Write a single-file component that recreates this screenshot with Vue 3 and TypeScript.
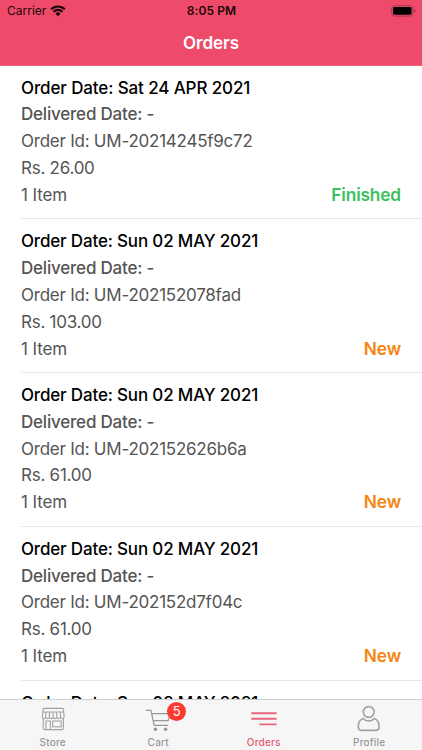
<script setup lang="ts">
interface Order {
  date: string
  delivered: string
  id: string
  price: string
  items: string
  status: 'Finished' | 'New'
}

const orders: Order[] = [
  { date: 'Sat 24 APR 2021', delivered: '-', id: 'UM-20214245f9c72', price: '26.00', items: '1 Item', status: 'Finished' },
  { date: 'Sun 02 MAY 2021', delivered: '-', id: 'UM-202152078fad', price: '103.00', items: '1 Item', status: 'New' },
  { date: 'Sun 02 MAY 2021', delivered: '-', id: 'UM-202152626b6a', price: '61.00', items: '1 Item', status: 'New' },
  { date: 'Sun 02 MAY 2021', delivered: '-', id: 'UM-202152d7f04c', price: '61.00', items: '1 Item', status: 'New' },
]
const nextDate = 'Sun 02 MAY 2021'
</script>

<template>
  <div class="screen">
    <header class="header">
      <div class="status-bar">
        <div class="carrier">
          <span>Carrier</span>
          <svg class="wifi" viewBox="0 0 16 12" width="16" height="12">
            <path d="M1.1 4.3A9.8 9.8 0 0 1 14.9 4.3M3.5 6.8A6.3 6.3 0 0 1 12.5 6.8" fill="none" stroke="#1c060b" stroke-width="2.1" />
            <path d="M5.4 8.6A3.7 3.7 0 0 1 10.6 8.6L8 11.2Z" fill="#1c060b" />
          </svg>
        </div>
        <span class="clock">8:05 PM</span>
        <svg class="battery" viewBox="0 0 25 12" width="25" height="12">
          <rect x="0.7" y="0.7" width="21.2" height="10.4" rx="2.8" fill="none" stroke="#a03850" />
          <rect x="2.1" y="2.1" width="18.4" height="7.6" rx="1.4" fill="#000" />
          <path d="M23.2 4.2Q24.5 4.6 24.5 5.9T23.2 7.6Z" fill="#8b2e41" />
        </svg>
      </div>
      <h1 class="title">Orders</h1>
    </header>

    <main class="orders">
      <article v-for="order in orders" :key="order.id" class="order">
        <p class="date">Order Date: {{ order.date }}</p>
        <p class="delivered">Delivered Date: {{ order.delivered }}</p>
        <p class="order-id">Order Id: {{ order.id }}</p>
        <p class="price">Rs. {{ order.price }}</p>
        <div class="summary">
          <p class="items">{{ order.items }}</p>
          <strong :class="['state', order.status.toLowerCase()]">{{ order.status }}</strong>
        </div>
      </article>
      <article class="order">
        <p class="date">Order Date: {{ nextDate }}</p>
      </article>
    </main>

    <nav class="tabs">
      <div class="tab">
        <svg viewBox="0 0 32 28" width="32" height="28" fill="none" stroke="#a1a1a1" stroke-width="1.1">
          <path d="M6 7V4.8Q6 3.4 7.4 3.4H25.2Q26.6 3.4 26.6 4.8V7Z" />
          <path d="M6 7L5.3 12Q5.5 13.6 6.9 13.6Q8.4 13.6 8.6 12.2Q9 13.6 10.4 13.6Q11.9 13.6 12.3 12.2Q12.8 13.6 14.2 13.6Q15.6 13.6 16.1 12.2Q16.6 13.6 18 13.6Q19.4 13.6 19.9 12.2Q20.4 13.6 21.8 13.6Q23.3 13.6 23.7 12.2Q24.1 13.6 25.5 13.6Q27 13.6 27.2 12L26.6 7M9.1 7L8.6 12.2M12.6 7L12.3 12.2M16.1 7V12.2M19.6 7L19.9 12.2M23.2 7L23.7 12.2" />
          <path d="M6.2 13.6V23.2Q6.2 24.6 7.6 24.6H25Q26.4 24.6 26.4 23.2V13.6M8.9 24.6V16H13.4V24.6" />
          <rect x="15.6" y="16" width="8.6" height="5.8" />
        </svg>
        <span>Store</span>
      </div>
      <div class="tab">
        <div class="cart-icon">
          <svg viewBox="0 0 32 28" width="32" height="28" fill="none" stroke="#979797" stroke-width="1.2">
            <path d="M4 5.3H8.9L12.2 20.3H26M9.7 8.6H28L26.2 15.7H11.2" />
            <circle cx="13.4" cy="24.2" r="1.7" fill="#929292" stroke="none" />
            <circle cx="23.6" cy="24.2" r="1.7" fill="#929292" stroke="none" />
          </svg>
          <span class="badge">5</span>
        </div>
        <span>Cart</span>
      </div>
      <div class="tab active">
        <svg viewBox="0 0 32 28" width="32" height="28" fill="none" stroke="#e6677f" stroke-width="1.9">
          <path d="M3.3 8.2H28.6M3.3 13.8H28.6M11.4 19.4H28.6" />
        </svg>
        <span>Orders</span>
      </div>
      <div class="tab">
        <svg viewBox="0 0 32 28" width="32" height="28" fill="none" stroke="#a1a1a1" stroke-width="1.6">
          <circle cx="15.7" cy="7" r="5.4" />
          <path d="M10.2 13.4C7 14.4 5.3 17.8 5.3 21.8C5.3 24.4 6.6 25.4 8.8 25.4H22.6C24.8 25.4 26.1 24.4 26.1 21.8C26.1 17.8 24.4 14.4 21.2 13.4C19.6 15.4 17.8 16 15.7 16C13.6 16 11.8 15.4 10.2 13.4Z" stroke-linejoin="round" />
        </svg>
        <span>Profile</span>
      </div>
    </nav>
  </div>
</template>

<style>
body {
  background: #fff;
}
</style>

<style scoped>
.screen {
  display: flex;
  flex-direction: column;
  box-sizing: border-box;
  height: 750px;
  overflow: hidden;
  font-family: Inter, "Liberation Sans", sans-serif;
  color: #555;
  background: #fff;
}

.header {
  flex: none;
  box-sizing: border-box;
  height: 65.6px;
  background: #ed4b69;
  border-bottom: 1px solid #e9657f;
}

.status-bar {
  display: grid;
  grid-template-columns: 1fr auto 1fr;
  align-items: center;
  height: 21px;
  padding: 0 6px 0 7px;
  font-size: 12px;
  color: #1c060b;
}

.carrier {
  display: flex;
  align-items: center;
  gap: 4px;
}

.clock {
  font-weight: 600;
  letter-spacing: 0.1px;
}

.battery {
  justify-self: end;
}

.title {
  margin: 0;
  font-size: 17px;
  line-height: 44px;
  font-weight: 600;
  letter-spacing: -0.05px;
  text-align: center;
  color: #fff;
}

.orders {
  flex: 1;
  min-height: 0;
  overflow: hidden;
}

.order {
  box-sizing: border-box;
  height: 153.75px;
  margin-left: 21px;
  padding: 9px 21px 0 0;
  border-bottom: 1px solid #e6e6e6;
}

.order p {
  margin: 0;
  font-size: 17px;
  line-height: 26.8px;
  letter-spacing: -0.1px;
}

.order .date {
  font-weight: 500;
  letter-spacing: -0.17px;
  color: #000;
}

.order:first-child .date {
  letter-spacing: -0.12px;
}

.order .delivered {
  font-weight: 500;
  letter-spacing: -0.2px;
}

.order .order-id {
  letter-spacing: -0.24px;
}

.order .price {
  letter-spacing: -0.25px;
}

.summary {
  display: flex;
  justify-content: space-between;
}

.state {
  font-size: 17.3px;
  line-height: 26.8px;
  font-weight: 600;
  letter-spacing: -0.15px;
}

.finished {
  color: #3bc15d;
}

.new {
  color: #f68412;
}

.tabs {
  flex: none;
  display: grid;
  grid-template-columns: repeat(4, 1fr);
  box-sizing: border-box;
  height: 51px;
  padding-top: 5px;
  background: #f6f6f6;
  border-top: 1px solid #cfcfcf;
}

.tab {
  display: flex;
  flex-direction: column;
  align-items: center;
  font-size: 10px;
  line-height: 14px;
  font-weight: 500;
  letter-spacing: 0.2px;
  color: #969696;
}

.tab svg {
  display: block;
  flex: none;
}

.tab > span {
  margin-top: 2px;
}

.active {
  color: #e45b76;
}

.cart-icon {
  position: relative;
}

.badge {
  position: absolute;
  top: -3px;
  left: 25px;
  width: 19px;
  height: 19px;
  border-radius: 50%;
  font-size: 13px;
  line-height: 19px;
  font-weight: 400;
  text-align: center;
  letter-spacing: 0;
  color: #fff;
  background: #fc3b31;
}
</style>
